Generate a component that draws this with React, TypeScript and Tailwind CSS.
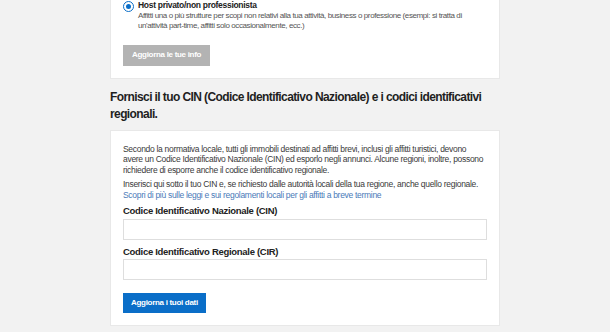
import React, { useState } from 'react';

const HostInfoCard = () => {
  const [checked] = useState(true);

  return (
    <section className="bg-white border border-[#e8e8e8] border-t-0 px-[12px] pb-[12px]">
      <label className="flex items-start gap-[4px]">
        <span className="flex items-center justify-center w-[11px] h-[11px] rounded-full border-[1.5px] border-[#0a6ec8] mt-[1px] shrink-0">
          {checked && <span className="w-[5px] h-[5px] rounded-full bg-[#0a6ec8]" />}
        </span>
        <span className="flex flex-col">
          <span className="text-[8.5px] leading-[11px] font-bold tracking-[-0.3px] text-[#222]">
            Host privato/non professionista
          </span>
          <span className="text-[8px] leading-[10px] tracking-[-0.4px] text-[#555]">
            Affitti una o più strutture per scopi non relativi alla tua attività, business o professione (esempi: si tratta di
            <br />
            un'attività part-time, affitti solo occasionalmente, ecc.)
          </span>
        </span>
      </label>
      <button
        disabled
        className="mt-[13.5px] h-[21px] px-[9px] bg-[#b3b3b3] text-white text-[8px] font-bold tracking-[-0.3px]"
      >
        Aggiorna le tue info
      </button>
    </section>
  );
};

const Field = ({ label }: { label: string }) => (
  <div className="flex flex-col">
    <span className="text-[9.5px] leading-[13px] font-bold tracking-[-0.3px] text-[#222]">
      {label}
    </span>
    <input className="mt-[1.5px] h-[21px] w-full border border-[#dedede] bg-white outline-none" />
  </div>
);

const CinCard = () => (
  <section className="bg-white border border-[#e8e8e8] px-[12px] pt-[13px] pb-[12.5px]">
    <p className="text-[8.5px] leading-[10.75px] tracking-[-0.3px] text-[#3a3a3a] whitespace-nowrap">
      Secondo la normativa locale, tutti gli immobili destinati ad affitti brevi, inclusi gli affitti turistici, devono
      <br />
      avere un Codice Identificativo Nazionale (CIN) ed esporlo negli annunci. Alcune regioni, inoltre, possono
      <br />
      richiedere di esporre anche il codice identificativo regionale.
    </p>
    <p className="mt-[3px] text-[8.5px] leading-[10.75px] tracking-[-0.3px] text-[#3a3a3a] whitespace-nowrap">
      Inserisci qui sotto il tuo CIN e, se richiesto dalle autorità locali della tua regione, anche quello regionale.
      <br />
      <a className="text-[#4a7ab8]">
        Scopri di più sulle leggi e sui regolamenti locali per gli affitti a breve termine
      </a>
    </p>
    <div className="mt-[4px] flex flex-col gap-[5px]">
      <Field label="Codice Identificativo Nazionale (CIN)" />
      <Field label="Codice Identificativo Regionale (CIR)" />
    </div>
    <button className="mt-[12.5px] h-[20px] px-[8px] bg-[#0a6ec8] text-white text-[8px] font-bold tracking-[-0.3px]">
      Aggiorna i tuoi dati
    </button>
  </section>
);

const App = () => (
  <div className="min-h-[332px] bg-[#f2f2f2] font-['Liberation_Sans',Arial,sans-serif]">
    <div className="ml-[110px] w-[390px]">
      <HostInfoCard />
      <h2 className="mt-[10px] text-[12px] leading-[17px] font-bold tracking-[-0.6px] text-[#1f1f1f]">
        Fornisci il tuo CIN (Codice Identificativo Nazionale) e i codici identificativi regionali.
      </h2>
      <div className="mt-[7px]">
        <CinCard />
      </div>
    </div>
  </div>
);

export default App;
